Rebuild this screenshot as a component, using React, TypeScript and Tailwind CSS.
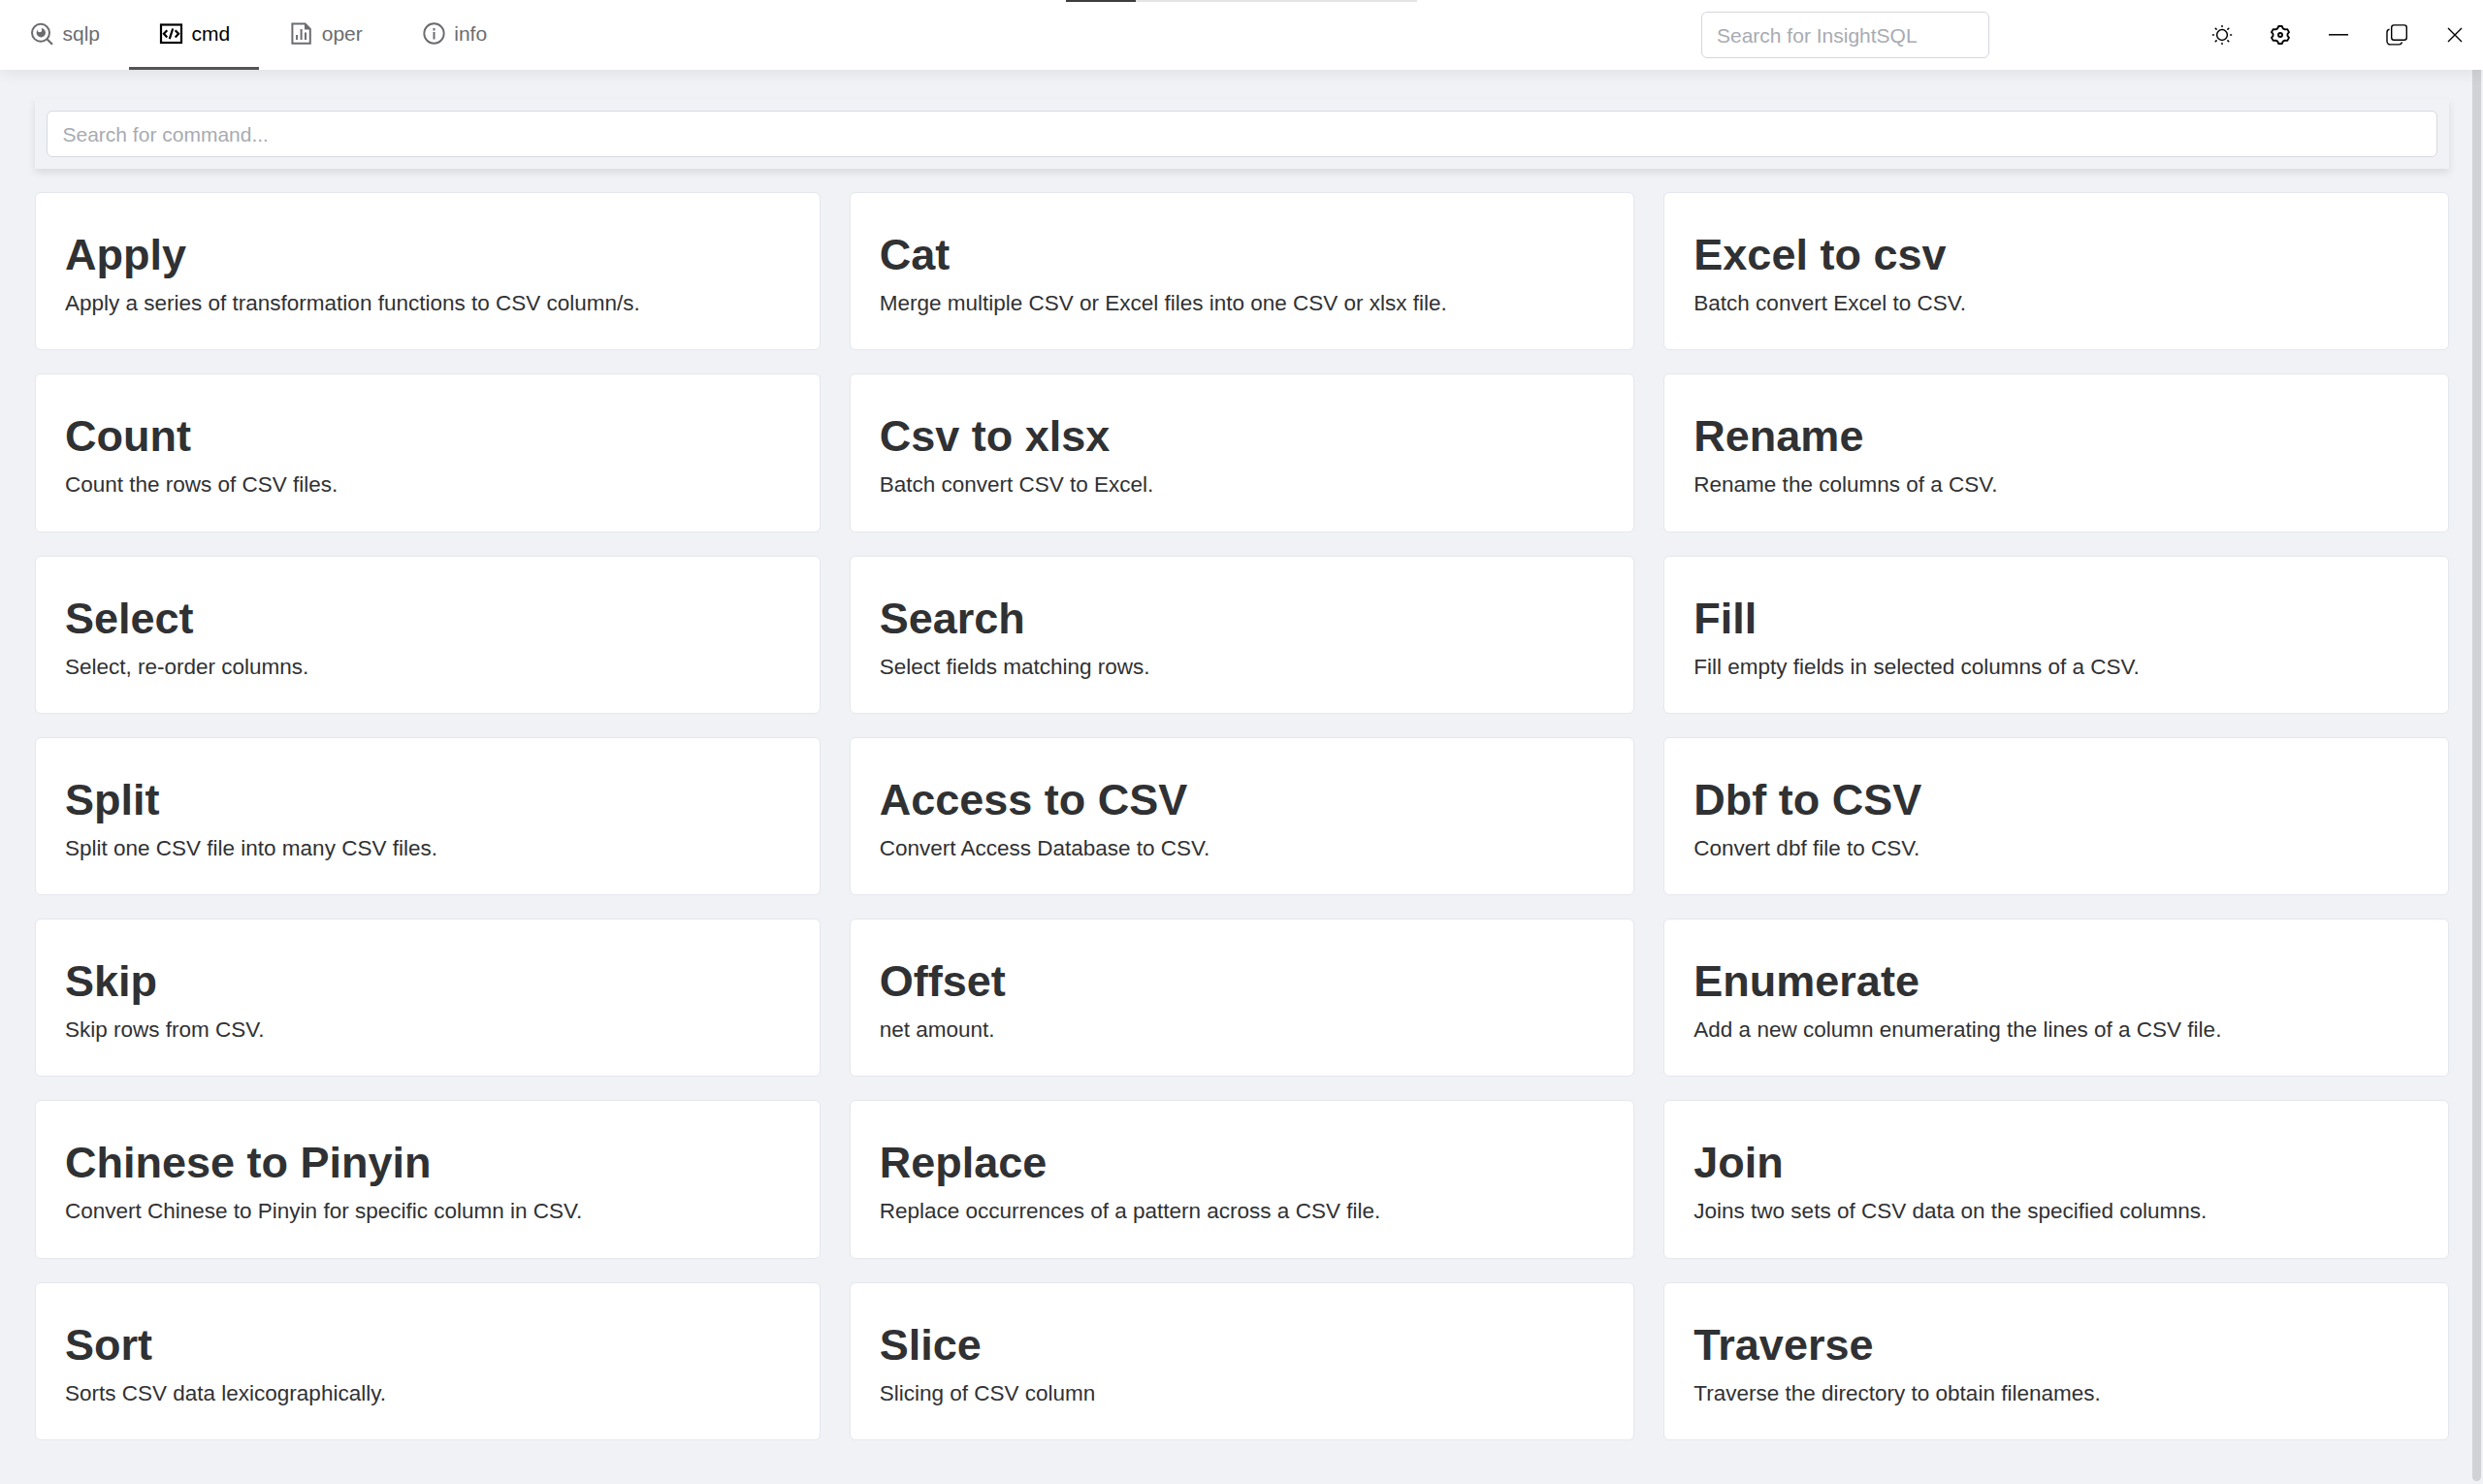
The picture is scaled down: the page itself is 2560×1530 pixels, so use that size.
import React from "react";

const commands: [string, string][] = [
  ["Apply", "Apply a series of transformation functions to CSV column/s."],
  ["Cat", "Merge multiple CSV or Excel files into one CSV or xlsx file."],
  ["Excel to csv", "Batch convert Excel to CSV."],
  ["Count", "Count the rows of CSV files."],
  ["Csv to xlsx", "Batch convert CSV to Excel."],
  ["Rename", "Rename the columns of a CSV."],
  ["Select", "Select, re-order columns."],
  ["Search", "Select fields matching rows."],
  ["Fill", "Fill empty fields in selected columns of a CSV."],
  ["Split", "Split one CSV file into many CSV files."],
  ["Access to CSV", "Convert Access Database to CSV."],
  ["Dbf to CSV", "Convert dbf file to CSV."],
  ["Skip", "Skip rows from CSV."],
  ["Offset", "net amount."],
  ["Enumerate", "Add a new column enumerating the lines of a CSV file."],
  ["Chinese to Pinyin", "Convert Chinese to Pinyin for specific column in CSV."],
  ["Replace", "Replace occurrences of a pattern across a CSV file."],
  ["Join", "Joins two sets of CSV data on the specified columns."],
  ["Sort", "Sorts CSV data lexicographically."],
  ["Slice", "Slicing of CSV column"],
  ["Traverse", "Traverse the directory to obtain filenames."],
];

const svg = { fill: "none", stroke: "currentColor" };

const QueryIcon = () => (
  <svg viewBox="0 0 27 27" className="size-[27px]" {...svg} strokeWidth="2">
    <circle cx="12" cy="12.8" r="9" />
    <path d="M18.4 19.2 24 24.8" strokeWidth="2.2" />
    <circle cx="12.3" cy="12.8" r="4.7" fill="currentColor" stroke="none" />
    <circle cx="10.9" cy="9.9" r="2.3" fill="white" stroke="none" />
  </svg>
);

const CodeIcon = () => (
  <svg viewBox="0 0 27 27" className="size-[27px]" {...svg} strokeWidth="2.2">
    <rect x="3" y="4.5" width="21" height="18.5" />
    <path d="m9.3 10.2-3.4 3.6 3.4 3.6M17.7 10.2l3.4 3.6-3.4 3.6M15.2 8.5l-3.4 10.6" />
  </svg>
);

const ChartFileIcon = () => (
  <svg viewBox="0 0 27 27" className="size-[27px]" {...svg} strokeWidth="2">
    <path d="M4.4 3.6h13.2l5.2 5.2v15H4.4z" />
    <path d="M17 3v6.4h6.4z" fill="currentColor" stroke="none" />
    <path d="M9.1 15v5M13.6 9v11M18 12.5v7.5" />
  </svg>
);

const InfoIcon = () => (
  <svg viewBox="0 0 27 27" className="size-[27px]" {...svg} strokeWidth="1.9">
    <circle cx="13.5" cy="13.5" r="10.2" />
    <path d="M13.5 12v7.5M13.5 8v2.4" strokeWidth="2" />
  </svg>
);

const SunIcon = () => (
  <svg viewBox="0 0 24 24" className="size-6" {...svg} strokeWidth="1.5">
    <circle cx="12" cy="12" r="5.4" />
    <path
      strokeLinecap="round"
      d="M12 2.4v1M12 20.6v1M2.4 12h1M20.6 12h1M5.2 5.2l.9.9M17.9 17.9l.9.9M5.2 18.8l.9-.9M17.9 6.1l.9-.9"
    />
  </svg>
);

const GearIcon = () => (
  <svg viewBox="0 0 24 24" className="size-6" {...svg} strokeWidth="1.9" strokeLinejoin="round">
    <circle cx="12" cy="12" r="2" />
    <path d="M10.3 3h3.4l1.1 2.3 2 1.1 2.5-.3 1.7 3-1.5 1.9v2l1.5 1.9-1.7 3-2.5-.3-2 1.1-1.1 2.3h-3.4l-1.1-2.3-2-1.1-2.5.3-1.7-3 1.5-1.9v-2L3 9.1l1.7-3 2.5.3 2-1.1z" />
  </svg>
);

const MinusIcon = () => (
  <svg viewBox="0 0 24 24" className="size-6" {...svg} strokeWidth="1.5">
    <path d="M2 11.8h20" />
  </svg>
);

const RestoreIcon = () => (
  <svg viewBox="0 0 24 24" className="size-6" {...svg} strokeWidth="1.4">
    <rect x="6.7" y="1.9" width="15.6" height="15.4" rx="2.5" />
    <path d="M4.6 6.3A3 3 0 0 0 2 9.3v9.2a3.4 3.4 0 0 0 3.4 3.4h9.1a3 3 0 0 0 2.9-2.5" />
  </svg>
);

const CloseIcon = () => (
  <svg viewBox="0 0 24 24" className="size-6" {...svg} strokeWidth="1.4">
    <path d="m5 5 14 14M19 5 5 19" />
  </svg>
);

const tabs = [
  { label: "sqlp", Icon: QueryIcon },
  { label: "cmd", Icon: CodeIcon, active: true },
  { label: "oper", Icon: ChartFileIcon },
  { label: "info", Icon: InfoIcon },
];

const windowButtons = [SunIcon, GearIcon, MinusIcon, RestoreIcon, CloseIcon];

export default function App() {
  return (
    <div className="relative flex h-[1530px] w-[2560px] flex-col overflow-hidden bg-[#f0f2f6] font-['Liberation_Sans',Arial,sans-serif] text-[#303133]">
      <header className="relative z-10 flex h-[72px] shrink-0 items-stretch justify-between bg-white shadow-[0_0_18px_rgba(0,0,0,0.1)]">
        <nav className="flex">
          {tabs.map(({ label, Icon, active }) => (
            <a
              key={label}
              className={
                active
                  ? "flex items-center gap-[7.5px] border-b-[3px] border-[#545454] px-[30px] text-[21px] text-black"
                  : "flex items-center gap-[7.5px] border-b-[3px] border-transparent px-[30px] text-[21px] text-[#6b6c70]"
              }
            >
              <Icon />
              <span>{label}</span>
            </a>
          ))}
        </nav>
        <div className="flex items-center pr-[17px]">
          <input
            className="mr-[228px] h-12 w-[297.5px] rounded-[6px] border border-[#d3d6de] bg-white px-[15.5px] pt-[2px] text-[21px] placeholder:text-[#a8abb2]"
            placeholder="Search for InsightSQL"
          />
          <div className="flex items-center gap-9 text-black">
            {windowButtons.map((Icon, i) => (
              <button key={i}>
                <Icon />
              </button>
            ))}
          </div>
        </div>
        <div className="absolute top-0 left-[1099px] flex h-[2px] w-[362px] bg-[#e4e4e4]">
          <div className="w-[72px] bg-[#3d3d3d]" />
        </div>
      </header>

      <main className="flex min-h-0 flex-1">
        <div className="flex flex-1 flex-col gap-6 pt-[30px] pr-6 pl-9">
          <div className="h-[72px] bg-[#f0f2f6] p-3 shadow-[0_4px_8px_rgba(0,0,0,0.1)]">
            <input
              className="block h-12 w-full rounded-[6px] border border-[#d6d9e1] bg-white px-[15.5px] pt-[2px] text-[21px] placeholder:text-[#a8abb2]"
              placeholder="Search for command..."
            />
          </div>
          <div className="grid grid-cols-3 gap-x-[30px] gap-y-6">
            {commands.map(([title, text]) => (
              <section
                key={title}
                className="h-[163.3px] rounded-[6px] border border-[#e4e7ed] bg-white px-[30px] pt-9"
              >
                <h2 className="text-[45px] leading-[55px] font-bold">{title}</h2>
                <p className="text-[22.5px] leading-[46px]">{text}</p>
              </section>
            ))}
          </div>
        </div>
        <div className="w-[11px] pb-[3px]">
          <div className="h-full w-[9px] rounded-b-[5px] bg-[#d1d2d6]" />
        </div>
      </main>
    </div>
  );
}
